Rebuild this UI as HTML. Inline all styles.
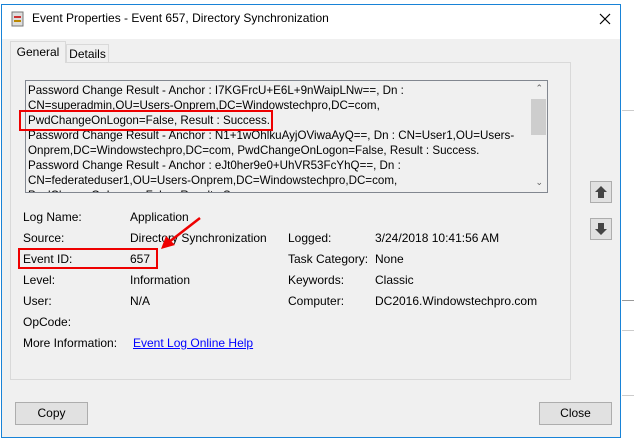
<!DOCTYPE html>
<html><head><style>
body{margin:0;width:634px;height:440px;overflow:hidden;background:#fff;font-family:"Liberation Sans",sans-serif;font-size:12px;color:#000;position:relative}
.a{position:absolute;white-space:nowrap}
.btn{position:absolute;background:#e1e1e1;border:1px solid #adadad;box-sizing:border-box;text-align:center;line-height:20px;font-size:12px}
</style></head><body>
<div class="a" style="left:0;top:0;width:634px;height:5px;background:#fff"></div>
<div class="a" style="left:622px;top:0;width:12px;height:440px;background:#fff"></div>
<div class="a" style="left:622px;top:110px;width:12px;height:1px;background:#ccc"></div>
<div class="a" style="left:622px;top:300px;width:12px;height:1px;background:#999"></div>
<div class="a" style="left:622px;top:330px;width:12px;height:1px;background:#ccc"></div>
<div class="a" style="left:622px;top:395px;width:12px;height:1px;background:#ccc"></div>
<div class="a" style="left:1px;top:4px;width:620px;height:434px;background:#f0f0f0;border:1px solid #1883d7;box-sizing:border-box"></div>
<div class="a" style="left:2px;top:5px;width:618px;height:34px;background:#fff"></div>
<svg class="a" style="left:10px;top:10px" width="16" height="18"><rect x="2" y="2" width="11" height="14" fill="#ddd" stroke="#777"/><rect x="4" y="6" width="7" height="2" fill="#c33"/><rect x="4" y="10" width="7" height="2" fill="#b80"/></svg>
<div class="a" style="left:32px;top:11px;font-size:12px">Event Properties - Event 657, Directory Synchronization</div>
<svg class="a" style="left:599px;top:13px" width="12" height="12"><path d="M1 1L11 11M11 1L1 11" stroke="#000" stroke-width="1.2"/></svg>
<div class="a" style="left:10px;top:62px;width:561px;height:318px;border:1px solid #d9d9d9;background:#f0f0f0;box-sizing:border-box"></div>
<div class="a" style="left:66px;top:44px;width:43px;height:19px;border:1px solid #d9d9d9;background:#f0f0f0;box-sizing:border-box;text-align:center;line-height:18px">Details</div>
<div class="a" style="left:10px;top:41px;width:56px;height:22px;border:1px solid #d9d9d9;border-bottom:none;background:#f0f0f0;box-sizing:border-box;text-align:center;line-height:20px">General</div>
<div class="a" style="left:25px;top:80px;width:523px;height:113px;background:#f0f0f0;border:1px solid #828790;box-sizing:border-box;overflow:hidden">
<div style="position:absolute;left:2px;top:2px;font-size:11.6px;line-height:15px;white-space:nowrap">Password Change Result - Anchor : I7KGFrcU+E6L+9nWaipLNw==, Dn :<br>CN=superadmin,OU=Users-Onprem,DC=Windowstechpro,DC=com,<br>PwdChangeOnLogon=False, Result : Success.<br>Password Change Result - Anchor : N1+1wOhlkuAyjOViwaAyQ==, Dn : CN=User1,OU=Users-<br>Onprem,DC=Windowstechpro,DC=com, PwdChangeOnLogon=False, Result : Success.<br>Password Change Result - Anchor : eJt0her9e0+UhVR53FcYhQ==, Dn :<br>CN=federateduser1,OU=Users-Onprem,DC=Windowstechpro,DC=com,<br>PwdChangeOnLogon=False, Result : Success.</div>
<div style="position:absolute;right:0;top:0;width:17px;height:111px;background:#f0f0f0"></div>
<div style="position:absolute;right:1px;top:18px;width:15px;height:36px;background:#cdcdcd"></div>
<div style="position:absolute;right:4px;top:2px;font-size:9px;color:#606060">⌃</div>
<div style="position:absolute;right:4px;top:96px;font-size:9px;color:#606060">⌄</div>
</div>
<div class="a" style="left:19px;top:110px;width:254px;height:21px;border:2px solid #e00;box-sizing:border-box"></div>
<div class="btn" style="left:590px;top:181px;width:22px;height:22px"><svg width="20" height="20"><path d="M10 4 L16 10 L13 10 L13 16 L7 16 L7 10 L4 10Z" fill="#444"/></svg></div>
<div class="btn" style="left:590px;top:218px;width:22px;height:22px"><svg width="20" height="20"><path d="M10 16 L16 10 L13 10 L13 4 L7 4 L7 10 L4 10Z" fill="#444"/></svg></div>
<div class="a" style="left:23px;top:210px">Log Name:</div><div class="a" style="left:130px;top:210px">Application</div>
<div class="a" style="left:23px;top:231px">Source:</div><div class="a" style="left:130px;top:231px">Directory Synchronization</div>
<div class="a" style="left:288px;top:231px">Logged:</div><div class="a" style="left:375px;top:231px">3/24/2018 10:41:56 AM</div>
<div class="a" style="left:23px;top:252px">Event ID:</div><div class="a" style="left:130px;top:252px">657</div>
<div class="a" style="left:288px;top:252px">Task Category:</div><div class="a" style="left:375px;top:252px">None</div>
<div class="a" style="left:23px;top:273px">Level:</div><div class="a" style="left:130px;top:273px">Information</div>
<div class="a" style="left:288px;top:273px">Keywords:</div><div class="a" style="left:375px;top:273px">Classic</div>
<div class="a" style="left:23px;top:294px">User:</div><div class="a" style="left:130px;top:294px">N/A</div>
<div class="a" style="left:288px;top:294px">Computer:</div><div class="a" style="left:375px;top:294px">DC2016.Windowstechpro.com</div>
<div class="a" style="left:23px;top:315px">OpCode:</div>
<div class="a" style="left:23px;top:336px">More Information:</div><div class="a" style="left:133px;top:336px;color:#00f;text-decoration:underline">Event Log Online Help</div>
<div class="a" style="left:18px;top:248px;width:140px;height:21px;border:2px solid #e00;box-sizing:border-box"></div>
<svg class="a" style="left:155px;top:215px" width="50" height="40"><line x1="45" y1="3" x2="14" y2="27" stroke="#e00" stroke-width="2.5"/><path d="M6 34 L11 21 L20 30Z" fill="#e00"/></svg>
<div class="btn" style="left:15px;top:402px;width:73px;height:23px">Copy</div>
<div class="btn" style="left:539px;top:402px;width:73px;height:23px">Close</div>
</body></html>
